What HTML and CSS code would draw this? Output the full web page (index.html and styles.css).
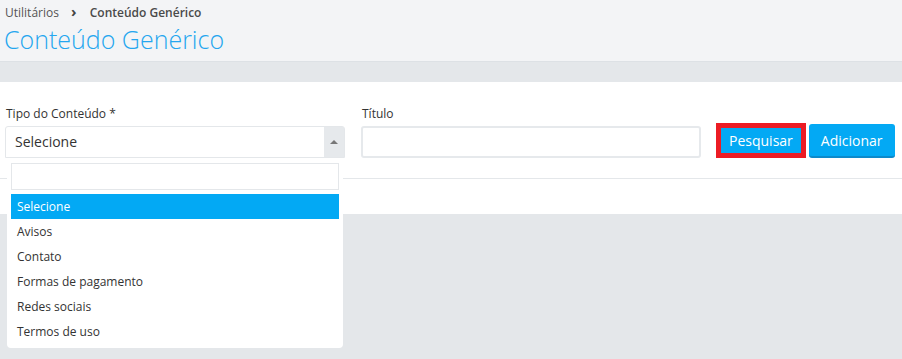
FILE: index.html
```html
<!DOCTYPE html>
<html lang="pt-BR">
<head>
    <meta charset="UTF-8">
    <meta name="viewport" content="width=device-width, initial-scale=1.0">
    <title>Conteúdo Genérico</title>
    <link rel="stylesheet" href="styles.css">
</head>
<body>
    <div class="page-header">
        <div class="breadcrumb">
            <span>Utilitários</span>
            <span class="sep">&#8250;</span>
            <span class="current">Conteúdo Genérico</span>
        </div>
        <h1 class="page-title">Conteúdo Genérico</h1>
    </div>

    <div class="content">
        <div class="card">
            <div class="card-body">
                <div class="field">
                    <label>Tipo do Conteúdo *</label>
                    <div class="select open">
                        <span class="select-value">Selecione</span>
                        <span class="select-arrow"></span>
                        <div class="dropdown">
                            <input type="text" class="dropdown-search">
                            <ul class="options">
                                <li class="active">Selecione</li>
                                <li>Avisos</li>
                                <li>Contato</li>
                                <li>Formas de pagamento</li>
                                <li>Redes sociais</li>
                                <li>Termos de uso</li>
                            </ul>
                        </div>
                    </div>
                </div>
                <div class="field">
                    <label for="titulo">Título</label>
                    <input type="text" id="titulo" class="input">
                </div>
                <div class="actions">
                    <button class="btn">Pesquisar<span class="mark"></span></button>
                    <button class="btn">Adicionar</button>
                </div>
            </div>
            <div class="card-footer"></div>
        </div>
    </div>
</body>
</html>
```

FILE: styles.css
```css
body {
    margin: 0;
    font-family: "Open Sans", "Liberation Sans", sans-serif;
    font-size: 12px;
    color: #333;
    background-color: #e4e7ea;
}
.page-header {
    background-color: #f3f4f6;
    border-bottom: 1px solid #dde1e5;
    height: 62px;
    box-sizing: border-box;
    padding: 2px 5px 0;
}
.breadcrumb {
    color: #555;
    line-height: 18px;
}
.breadcrumb .sep {
    font-weight: bold;
    font-size: 15px;
    margin: 0 10px 0 9px;
    color: #444;
}
.breadcrumb .current {
    font-weight: 600;
    color: #4a4a4a;
}
.page-title {
    margin: 1px 0 0 -1px;
    font-size: 25px;
    font-weight: 300;
    color: #24a6ef;
    line-height: 32px;
}
.content {
    padding-top: 20px;
    min-height: 297px;
    box-sizing: border-box;
}
.card {
    background-color: #fff;
}
.card-body {
    display: flex;
    align-items: flex-end;
    padding: 20px 7px 20px 5px;
    height: 96px;
    box-sizing: border-box;
}
.field {
    width: 340px;
    flex-shrink: 0;
    margin-right: 16px;
}
.field label {
    display: block;
    line-height: 17px;
    margin-bottom: 4px;
    padding-left: 1px;
}
.input {
    display: block;
    width: 100%;
    height: 32px;
    box-sizing: border-box;
    border: 2px solid #e6e9ec;
    border-radius: 3px;
    margin: 0;
}
.select {
    position: relative;
    height: 32px;
    border: 1px solid #e4e7ea;
    border-radius: 3px 3px 0 0;
    box-sizing: border-box;
}
.select-value {
    display: block;
    font-size: 14px;
    line-height: 30px;
    padding-left: 9px;
}
.select-arrow {
    position: absolute;
    top: 0;
    right: 0;
    width: 20px;
    height: 30px;
    background-color: #e6e9ec;
}
.select-arrow::after {
    content: "";
    position: absolute;
    left: 6px;
    top: 13px;
    border-left: 4px solid transparent;
    border-right: 4px solid transparent;
    border-bottom: 4px solid #777;
}
.dropdown {
    position: absolute;
    top: 31px;
    left: 1px;
    width: 336px;
    box-sizing: border-box;
    background-color: #fff;
    padding: 5px 4px 4px;
    border-radius: 0 0 4px 4px;
    z-index: 2;
}
.dropdown-search {
    display: block;
    width: 100%;
    height: 27px;
    box-sizing: border-box;
    border: 1px solid #e4e7ea;
    margin: 0 0 4px;
}
.options {
    list-style: none;
    margin: 0;
    padding: 0;
}
.options li {
    height: 25px;
    line-height: 25px;
    padding-left: 6px;
}
.options li.active {
    background-color: #03a9f4;
    color: #fff;
}
.actions {
    display: flex;
    gap: 4px;
}
.btn {
    position: relative;
    height: 34px;
    padding: 0 12px;
    font-family: "Open Sans", "Liberation Sans", sans-serif;
    font-size: 14px;
    color: #fff;
    background-color: #03a9f4;
    border: none;
    border-bottom: 2px solid #0c8acb;
    border-radius: 3px;
}
.btn .mark {
    position: absolute;
    top: -1px;
    left: -1px;
    right: -1px;
    bottom: -2px;
    border: 5px solid #ec1c24;
}
.card-footer {
    border-top: 1px solid #e4e7ea;
    height: 35px;
}
```
